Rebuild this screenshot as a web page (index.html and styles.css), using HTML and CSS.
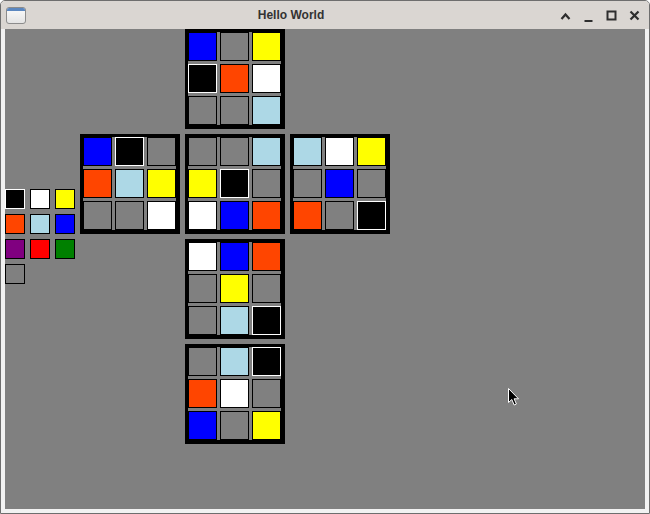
FILE: index.html
```html
<!DOCTYPE html>
<html>
<head>
<meta charset="utf-8">
<link rel="stylesheet" href="styles.css">
</head>
<body>
<div class="window">
  <div class="titlebar">
    <div class="app-icon"><span class="app-icon-bar"></span></div>
    <div class="title">Hello World</div>
    <div class="controls">
      <svg class="ctl" width="23" height="28" viewBox="0 0 23 28"><path d="M7.5 18 L11.5 13.5 L15.5 18" fill="none" stroke="#2e2e2e" stroke-width="2.2"/></svg>
      <svg class="ctl" width="23" height="28" viewBox="0 0 23 28"><rect x="7.5" y="19" width="8" height="2" fill="#2e2e2e"/></svg>
      <svg class="ctl" width="23" height="28" viewBox="0 0 23 28"><rect x="7.5" y="10.5" width="8" height="8" fill="none" stroke="#2e2e2e" stroke-width="2"/></svg>
      <svg class="ctl" width="23" height="28" viewBox="0 0 23 28"><path d="M7.5 10.5 L15.5 18.5 M15.5 10.5 L7.5 18.5" fill="none" stroke="#2e2e2e" stroke-width="2.2"/></svg>
    </div>
  </div>
  <div class="frame">
    <div class="content">
      <div class="cube">
        <div class="face f-up">
          <div class="cells">
            <div class="c blue"></div><div class="c gray"></div><div class="c yellow"></div>
            <div class="c black"></div><div class="c orange"></div><div class="c white"></div>
            <div class="c gray"></div><div class="c gray"></div><div class="c lblue"></div>
          </div>
        </div>
        <div class="palette">
          <div class="sw black"></div><div class="sw white"></div><div class="sw yellow"></div>
          <div class="sw orange"></div><div class="sw lblue"></div><div class="sw blue"></div>
          <div class="sw purple"></div><div class="sw red"></div><div class="sw green"></div>
          <div class="sw gray"></div>
        </div>
        <div class="face f-left">
          <div class="cells">
            <div class="c blue"></div><div class="c black"></div><div class="c gray"></div>
            <div class="c orange"></div><div class="c lblue"></div><div class="c yellow"></div>
            <div class="c gray"></div><div class="c gray"></div><div class="c white"></div>
          </div>
        </div>
        <div class="face f-front">
          <div class="cells">
            <div class="c gray"></div><div class="c gray"></div><div class="c lblue"></div>
            <div class="c yellow"></div><div class="c black"></div><div class="c gray"></div>
            <div class="c white"></div><div class="c blue"></div><div class="c orange"></div>
          </div>
        </div>
        <div class="face f-right">
          <div class="cells">
            <div class="c lblue"></div><div class="c white"></div><div class="c yellow"></div>
            <div class="c gray"></div><div class="c blue"></div><div class="c gray"></div>
            <div class="c orange"></div><div class="c gray"></div><div class="c black"></div>
          </div>
        </div>
        <div class="face f-down">
          <div class="cells">
            <div class="c white"></div><div class="c blue"></div><div class="c orange"></div>
            <div class="c gray"></div><div class="c yellow"></div><div class="c gray"></div>
            <div class="c gray"></div><div class="c lblue"></div><div class="c black"></div>
          </div>
        </div>
        <div class="face f-back">
          <div class="cells">
            <div class="c gray"></div><div class="c lblue"></div><div class="c black"></div>
            <div class="c orange"></div><div class="c white"></div><div class="c gray"></div>
            <div class="c blue"></div><div class="c gray"></div><div class="c yellow"></div>
          </div>
        </div>
      </div>
      <svg class="cursor" width="12" height="19" viewBox="0 0 12 19"><path d="M0.5 0.5 L0.5 14.5 L3.8 11.5 L6.2 17 L8.4 16 L6.1 10.8 L10.5 10.8 Z" fill="#000" stroke="#fff" stroke-width="1"/></svg>
    </div>
  </div>
</div>
</body>
</html>
```
FILE: styles.css
```css
* { box-sizing: border-box; }
html, body { margin: 0; padding: 0; }
body { width: 650px; height: 514px; background: #ffffff; font-family: "Liberation Sans", Arial, sans-serif; }

.window {
  width: 650px;
  height: 514px;
  border: 1px solid #6e6e6e;
  border-radius: 5px 5px 0 0;
  background: #f2f2f2;
  display: flex;
  flex-direction: column;
  overflow: hidden;
}

.titlebar {
  height: 28px;
  flex: none;
  background: #dad6d2;
  display: flex;
  align-items: center;
}

.app-icon {
  width: 20px;
  height: 17px;
  margin-left: 5px;
  margin-top: 1px;
  border: 1px solid #8c8c8c;
  border-radius: 3px;
  background: linear-gradient(#fbfbfb, #e4e4e4);
  overflow: hidden;
}
.app-icon-bar {
  display: block;
  height: 3px;
  background: #5b87c0;
}

.title {
  flex: 1;
  text-align: center;
  font-weight: bold;
  font-size: 12px;
  color: #333333;
  padding-left: 2px;
}

.controls {
  display: flex;
  margin-right: 3px;
}
.ctl { display: block; }

.frame {
  flex: 1;
  padding: 0 4px 4px 4px;
  background: #f2f2f2;
  display: flex;
}

.content {
  flex: 1;
  background: #808080;
  position: relative;
  overflow: hidden;
}

.cube {
  display: grid;
  grid-template-columns: 70px 100px 100px 100px;
  grid-template-rows: repeat(4, 100px);
  gap: 5px;
}

.face {
  background: #000000;
  padding: 3px 4px 4px 3px;
}
.cells {
  display: grid;
  grid-template-columns: repeat(3, 29px);
  grid-template-rows: repeat(3, 29px);
  gap: 3px;
  background: #808080;
}

.f-up { grid-column: 3; grid-row: 1; }
.f-left { grid-column: 2; grid-row: 2; }
.f-front { grid-column: 3; grid-row: 2; }
.f-right { grid-column: 4; grid-row: 2; }
.f-down { grid-column: 3; grid-row: 3; }
.f-back { grid-column: 3; grid-row: 4; }

.palette {
  grid-column: 1;
  grid-row: 2 / span 2;
  align-self: center;
  display: grid;
  grid-template-columns: repeat(3, 20px);
  grid-auto-rows: 20px;
  gap: 5px;
}

.c, .sw { border: 1px solid #000000; }
.c.black, .sw.black { border-color: #ffffff; }

.blue { background: #0000ff; }
.gray { background: #808080; }
.yellow { background: #ffff00; }
.black { background: #000000; }
.orange { background: #ff4500; }
.white { background: #ffffff; }
.lblue { background: #add8e6; }
.purple { background: #800080; }
.red { background: #ff0000; }
.green { background: #008000; }

.cursor {
  position: absolute;
  left: 503px;
  top: 359px;
}
```
